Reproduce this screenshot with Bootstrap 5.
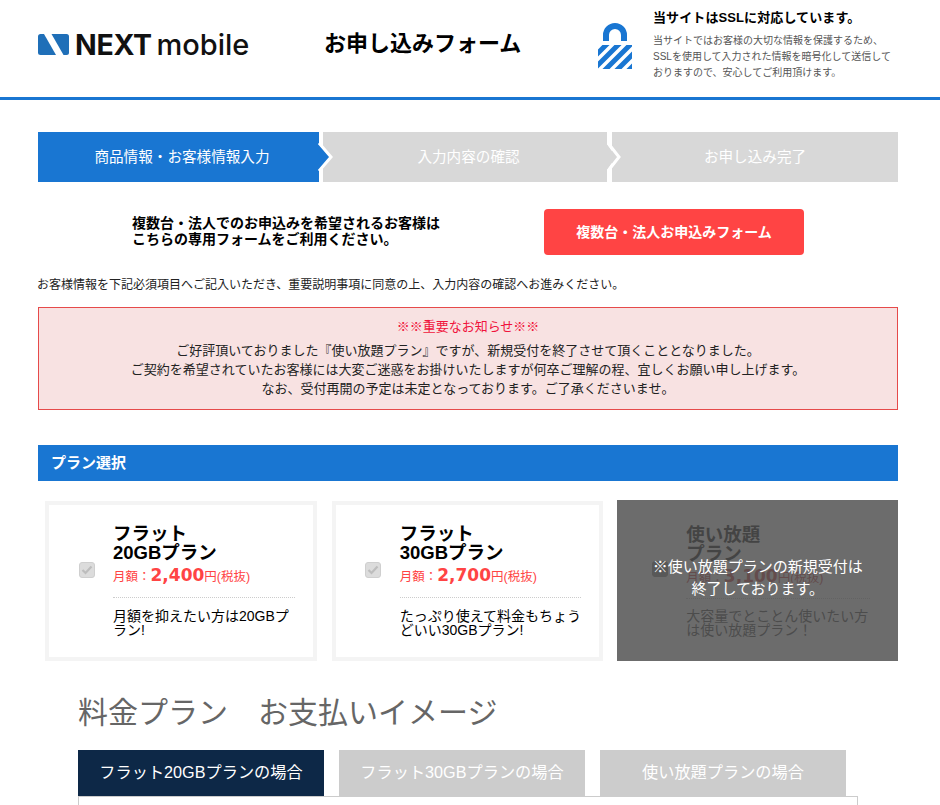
<!DOCTYPE html>
<html lang="ja"><head><meta charset="utf-8">
<link href="https://cdn.jsdelivr.net/npm/bootstrap@5.3.0/dist/css/bootstrap.min.css" rel="stylesheet">
<style>
body{font-family:"Liberation Sans","Noto Sans CJK JP",sans-serif;color:#000;font-size:13px;background:#fff;overflow:hidden;height:805px}
.top-head{height:100px;border-bottom:3px solid #1976d2;padding:0 38px}
.logo-box{width:212px;height:21px;margin-top:34px;gap:6px}
.logo-word{font-family:"Inter","Liberation Sans",sans-serif;line-height:22px;color:#111;white-space:nowrap;padding-top:5px}
.logo-word b{font-weight:700;font-size:28.5px;letter-spacing:-.3px}
.logo-word span{font-weight:500;font-size:29px;margin-left:1px}
.form-title{font-size:22px;font-weight:700;width:204px;margin:28px 0 0 74px;line-height:32px;white-space:nowrap}
.ssl-block{margin-left:auto;width:304px;padding-top:10px}
.ssl-lock{margin:13px 21px 0 0;flex:none}
.ssl-h{font-size:13px;font-weight:700;line-height:16px;margin:0 0 7px;letter-spacing:.1px;white-space:nowrap}
.ssl-p{font-size:10px;color:#555;line-height:16px;margin:0;white-space:nowrap}
.page-wrap{padding:32px 42px 0 38px}
.flow-row{height:50px;color:#fff;font-size:14.6px}
.flow-step{background:#d8d8d8;position:relative;height:50px;text-align:center;line-height:50px}
.flow-step.active{background:#1976d2}
.flow-a{width:281px;padding-left:7px}
.flow-b{width:284px;margin-left:4px;padding-left:7px}
.flow-c{width:286px;margin-left:5px}
.flow-arrow{position:absolute;left:0;top:0;margin-left:100%;z-index:2;overflow:visible}
.multi-row{height:46px;margin-top:27px}
.multi-txt{font-size:14px;font-weight:700;line-height:16px;margin:-2px 0 0 94px;width:412px;color:#000}
.multi-btn{width:260px;height:46px;background:#f44;color:#fff;font-weight:700;font-size:14px;border-radius:4px;border:0;line-height:46px;padding:0}
.lead-note{font-size:12px;margin:21px 0 0 -1px;line-height:18px;color:#222}
.notice-box{margin-top:13px;height:103px;background:#f8e2e2;border:1px solid #e64a4a;text-align:center;font-size:13px;line-height:19px;padding-top:9px;color:#222}
.notice-title{color:#f0143c;margin-bottom:5px}
.plan-bar{margin-top:35px;height:36px;background:#1976d2;color:#fff;font-weight:700;font-size:15px;line-height:36px;padding-left:13px}
.plan-row{margin-top:19px;height:161px;gap:15px;padding-left:7px}
.plan-card{width:272px;height:160px;margin-top:1px;border:4px solid #f4f4f4;position:relative;padding:19px 18px 0 64px;background:#fff}
.plan-check{position:absolute;left:30px;top:57px;width:16px;height:16px;border-radius:3px;background:#dcdcdc;border:1px solid #cfcfcf;display:flex;align-items:center;justify-content:center}
.plan-card + .plan-card .plan-check{left:29px}
.plan-off .plan-check{left:35px;top:61px;background:#585858;border-color:#585858}
.plan-name{font-size:18.5px;font-weight:700;line-height:19px;margin:0;color:#000}
.plan-price{color:#f44;font-size:12.5px;line-height:20px;margin:3px 0 0;padding-bottom:10px;border-bottom:1px dotted #ccc;white-space:nowrap}
.plan-price b{font-size:17px;font-family:"DejaVu Sans",sans-serif}
.plan-desc{font-size:14px;line-height:14px;margin:11px 0 0}
.plan-off{width:281px;height:161px;background:#6c6c6c;position:relative;margin-left:-1px;padding:25px 28px 0 69px}
.plan-off .plan-name{color:#444}
.plan-off .plan-price{color:#644c4c;border-color:#636363}
.plan-off .plan-desc{color:#4c4c4c;margin-top:10px}
.off-msg{position:absolute;inset:0;display:flex;align-items:center;justify-content:center;text-align:center;color:#fff;font-size:15px;line-height:22px;padding-bottom:5px}
.pay-title{font-size:30px;color:#666;margin:31px 0 0 40px;line-height:42px;font-weight:400}
.pay-tabs{margin:16px 0 0 40px;gap:15px;height:46px}
.pay-tab{width:246px;height:46px;background:#ccc;color:#fff;font-size:16.2px;line-height:44px;text-align:center}
.pay-tab.on{background:#0d2847}
.pay-panel{margin-left:40px;width:780px;height:20px;border:1px solid #ccc}
</style></head><body>
<header class="top-head d-flex align-items-start">
  <div class="d-flex align-items-center logo-box">
    <svg width="31" height="21" viewBox="0 0 31 21" class="flex-none"><rect width="31" height="21" rx="2.5" fill="#1f6fb8"/><path d="M6 0h7.5l12 21H18z" fill="#fff"/></svg>
    <div class="logo-word"><b>NEXT</b> <span>mobile</span></div>
  </div>
  <div class="form-title">お申し込みフォーム</div>
  <div class="ssl-block d-flex">
    <svg class="ssl-lock" width="34" height="46" viewBox="0 0 34 46">
      <defs><clipPath id="lockbody"><rect x="0" y="22" width="34" height="24"/></clipPath></defs>
      <path d="M5 18V12a12 12 0 0 1 24 0v6h-6V12a6 6 0 0 0-12 0v6z" fill="#1976d2"/>
      <g clip-path="url(#lockbody)" stroke="#1976d2" stroke-width="5"><path d="M-6 36 14 16M-6 48 26 16M4 50 36 18M16 50 38 28M28 50 40 38"/></g>
    </svg>
    <div><p class="ssl-h">当サイトはSSLに対応しています。</p><p class="ssl-p">当サイトではお客様の大切な情報を保護するため、<br>SSLを使用して入力された情報を暗号化して送信して<br>おりますので、安心してご利用頂けます。</p></div>
  </div>
</header>
<main class="page-wrap">
  <div class="flow-row d-flex">
    <div class="flow-step active flow-a">商品情報・お客様情報入力<svg class="flow-arrow" width="14" height="50" viewBox="0 0 14 50"><path d="M0 12 11 25 0 38z" fill="#1976d2"/><path d="M0 11 12 25 0 39" fill="none" stroke="#fff" stroke-width="3"/></svg></div>
    <div class="flow-step flow-b">入力内容の確認<svg class="flow-arrow" width="14" height="50" viewBox="0 0 14 50"><path d="M0 12 9 25 0 38z" fill="#d8d8d8"/><path d="M1 11 12 25 1 39" fill="none" stroke="#fff" stroke-width="3"/></svg></div>
    <div class="flow-step flow-c">お申し込み完了</div>
  </div>
  <div class="multi-row d-flex align-items-center">
    <p class="multi-txt">複数台・法人でのお申込みを希望されるお客様は<br>こちらの専用フォームをご利用ください。</p>
    <button class="multi-btn">複数台・法人お申込みフォーム</button>
  </div>
  <p class="lead-note">お客様情報を下記必須項目へご記入いただき、重要説明事項に同意の上、入力内容の確認へお進みください。</p>
  <div class="notice-box"><div class="notice-title">※※重要なお知らせ※※</div>ご好評頂いておりました『使い放題プラン』ですが、新規受付を終了させて頂くこととなりました。<br>ご契約を希望されていたお客様には大変ご迷惑をお掛けいたしますが何卒ご理解の程、宜しくお願い申し上げます。<br>なお、受付再開の予定は未定となっております。ご了承くださいませ。</div>
  <div class="plan-bar">プラン選択</div>
  <div class="plan-row d-flex">
    <div class="plan-card"><span class="plan-check"><svg width="12" height="10" viewBox="0 0 12 10"><path d="M1.5 5 4.5 8 10.5 1.5" fill="none" stroke="#bdbdbd" stroke-width="2.2"/></svg></span><p class="plan-name">フラット<br>20GBプラン</p><p class="plan-price">月額：<b>2,400</b>円(税抜)</p><p class="plan-desc">月額を抑えたい方は20GBプラン!</p></div>
    <div class="plan-card"><span class="plan-check"><svg width="12" height="10" viewBox="0 0 12 10"><path d="M1.5 5 4.5 8 10.5 1.5" fill="none" stroke="#bdbdbd" stroke-width="2.2"/></svg></span><p class="plan-name">フラット<br>30GBプラン</p><p class="plan-price">月額：<b>2,700</b>円(税抜)</p><p class="plan-desc">たっぷり使えて料金もちょうどいい30GBプラン!</p></div>
    <div class="plan-off"><span class="plan-check"></span><p class="plan-name">使い放題<br>プラン</p><p class="plan-price">月額：<b>3,100</b>円(税抜)</p><p class="plan-desc">大容量でとことん使いたい方は使い放題プラン！</p><div class="off-msg">※使い放題プランの新規受付は<br>終了しております。</div></div>
  </div>
  <h2 class="pay-title">料金プラン　お支払いイメージ</h2>
  <div class="pay-tabs d-flex"><div class="pay-tab on">フラット20GBプランの場合</div><div class="pay-tab">フラット30GBプランの場合</div><div class="pay-tab">使い放題プランの場合</div></div>
  <div class="pay-panel"></div>
</main>
<script src="https://cdn.jsdelivr.net/npm/bootstrap@5.3.0/dist/js/bootstrap.bundle.min.js"></script>
</body></html>
